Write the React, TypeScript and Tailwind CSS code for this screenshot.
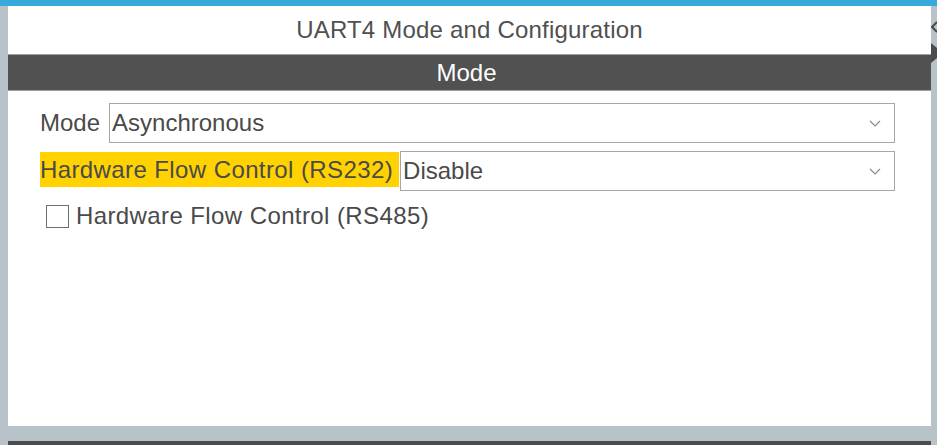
import { useState } from 'react'

function Chevron() {
  return (
    <svg width="12" height="7" viewBox="0 0 12 7" className="shrink-0">
      <path d="M1 1l5 5 5-5" fill="none" stroke="#8a8a8a" strokeWidth="1.2" />
    </svg>
  )
}

function Select({ value }: { value: string }) {
  return (
    <div className="flex-1 h-[40px] border border-[#a7a7a7] bg-white flex items-center pl-[2px] pr-[13px]">
      <span className="flex-1 text-[24px] leading-none text-[#4a4a4a]">{value}</span>
      <Chevron />
    </div>
  )
}

export default function App() {
  const [rs485, setRs485] = useState(false)

  return (
    <div className="w-[937px] h-[445px] bg-[#b8c3c9] flex flex-col overflow-hidden font-['Liberation_Sans',Arial,sans-serif]">
      <div className="h-[6px] bg-[#38a9db]" />
      <div className="flex h-[420px]">
        <div className="w-[8px]" />
        <div className="w-[923px] bg-white flex flex-col">
          <div className="h-[48px] flex items-center justify-center text-[24px] tracking-[0.2px] text-[#505050]">
            UART4 Mode and Configuration
          </div>
          <div className="h-[37px] bg-[#505150] border-y border-[#a0a0a0] flex items-center justify-center pr-[6px] text-[24px] text-white">
            Mode
          </div>
          <div className="flex flex-col pt-[12px] pl-[32px] pr-[36px]">
            <div className="flex items-center gap-[9px]">
              <span className="text-[24px] text-[#4a4a4a]">Mode</span>
              <Select value="Asynchronous" />
            </div>
            <div className="flex items-start gap-[1px] mt-[8px]">
              <span className="mt-[1px] h-[35px] flex items-center pr-[6px] bg-[#ffd200] text-[24px] tracking-[0.4px] text-[#4a4a4a] whitespace-nowrap">
                Hardware Flow Control (RS232)
              </span>
              <Select value="Disable" />
            </div>
            <label className="flex items-center gap-[7px] mt-[7px] ml-[6px] cursor-pointer">
              <span
                onClick={() => setRs485(!rs485)}
                className="w-[23px] h-[23px] border border-[#6e6e6e] bg-white flex items-center justify-center text-[16px] text-[#4a4a4a]"
              >
                {rs485 ? '✓' : ''}
              </span>
              <span className="text-[24px] tracking-[0.4px] text-[#4a4a4a]">Hardware Flow Control (RS485)</span>
            </label>
          </div>
        </div>
        <div className="w-[6px] flex flex-col items-start pt-[15px]">
          <svg width="6" height="12" viewBox="0 0 6 12">
            <path d="M6 1L1 6l5 5" fill="none" stroke="#4a4c4d" strokeWidth="2" />
          </svg>
          <svg width="6" height="20" viewBox="0 0 6 20" className="mt-[10px]">
            <path d="M0 0L6 5V15L0 20z" fill="#4a4c4d" />
          </svg>
        </div>
      </div>
      <div className="h-[15px]" />
      <div className="flex-1 ml-[8px] mr-[6px] bg-[#4a4c4d]" />
    </div>
  )
}
